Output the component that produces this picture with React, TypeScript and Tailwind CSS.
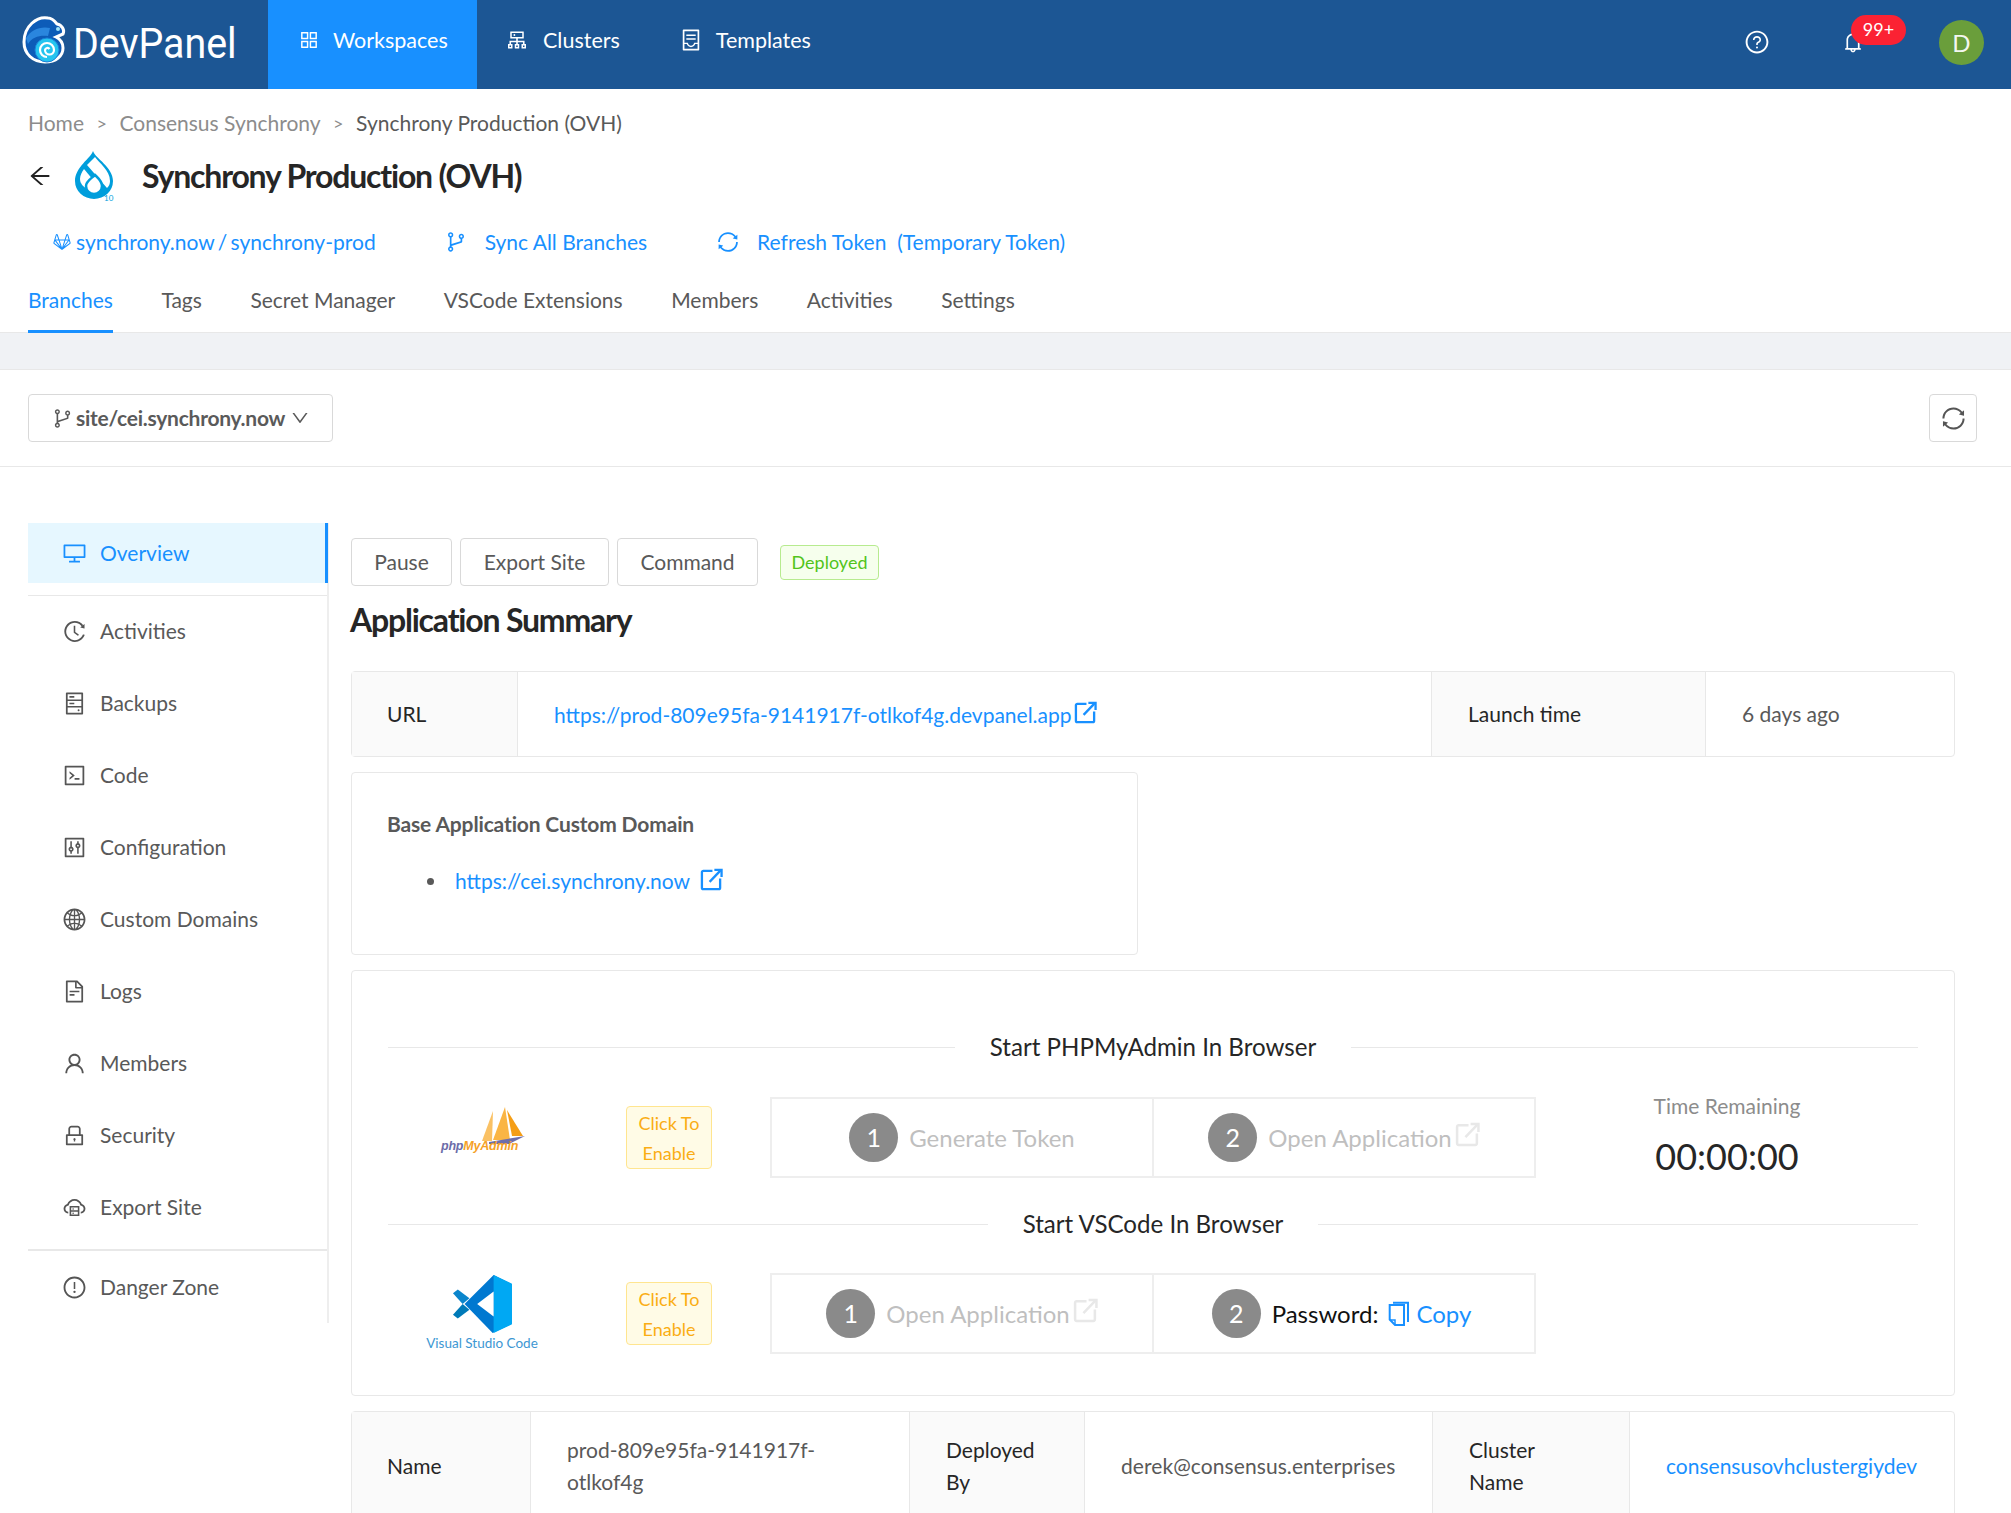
import React from "react";
import {
  AiOutlineAppstore, AiOutlineCluster, AiOutlineContainer, AiOutlineQuestionCircle, AiOutlineBell,
  AiOutlineDesktop, AiOutlineHistory, AiOutlineHdd, AiOutlineCode, AiOutlineControl, AiOutlineGlobal,
  AiOutlineFileText, AiOutlineUser, AiOutlineLock, AiOutlineCloudServer, AiOutlineExclamationCircle,
  AiOutlineBranches, AiOutlineSync, AiOutlineArrowLeft, AiOutlineGitlab, AiOutlineDown,
} from "react-icons/ai";

function Logo() {
  return (
    <svg viewBox="0 0 60 60" className="w-[60px] h-[60px] -mt-[9px]">
      <path d="M33 8C22 6 9 16 9 32c0 12 9 20 21 20 11 0 18-6 18-14 0-5-3-9-7-11l7-3c2-4-1-9-6-10-3-4-5-6-9-6z" fill="#0d5cb8" stroke="#fff" strokeWidth="3" />
      <path d="M11 28c5-8 14-12 24-10l-2 8c-8-1-16 1-20 8z" fill="#2a86de" />
      <circle cx="32" cy="40" r="12" fill="#25c4ef" stroke="#1a7fd8" strokeWidth="1" />
      <path d="M32 47a7 7 0 1 1 7-7 4.500 4.500 0 1 1-9 0 2.500 2.500 0 0 1 4.500-1" fill="none" stroke="#fff" strokeWidth="2.200" />
      <circle cx="43" cy="19" r="2" fill="#9fe3f7" />
    </svg>
  );
}

function Ext({ className }: { className?: string }) {
  return (
    <svg viewBox="0 0 24 24" fill="none" stroke="currentColor" strokeWidth="2.4" className={className}>
      <path d="M13 3H3.500A1.500 1.500 0 0 0 2 4.500v16A1.500 1.500 0 0 0 3.500 22h16a1.500 1.500 0 0 0 1.500-1.500V11" />
      <path d="M10 14.500L21.500 2.500" />
      <path d="M15 2h7.500v7.500" />
    </svg>
  );
}

function CopyIcon({ className }: { className?: string }) {
  return (
    <svg viewBox="9 11 22 26" fill="none" stroke="currentColor" strokeWidth="2" className={className}>
      <path d="M10.700 15H25v20h-9l-5.300-5.500z" />
      <path d="M11 30h5v5" strokeWidth="1.500" />
      <path d="M14 12.700h15V32" />
    </svg>
  );
}

function Drupal() {
  return (
    <div className="relative w-[40px] h-[50px]">
      <svg viewBox="10 6 40 48" className="w-[40px] h-[48px]">
        <path d="M28 6c2 7 20 16 20 30a19 18 0 0 1-38 0C10 22 26 13 28 6z" fill="#009edc" />
        <path d="M30 12c4 6 15 13 15 24 0 3-1 5-3 7L22 20z" fill="#fff" />
        <path d="M19 24l10 12-7 8c-3-2-7-5-7-10 0-4 2-7 4-10z" fill="#fff" />
        <path d="M30 30c3 3 7 6 7 11a8 8 0 0 1-16 0c0-5 6-8 9-11z" fill="#fff" stroke="#009edc" strokeWidth="2.500" />
      </svg>
      <span className="absolute left-[29px] top-[43px] text-[8px] leading-[8px] text-[#009edc]">10</span>
    </div>
  );
}

function Php() {
  return (
    <div className="relative w-[88px] h-[54px]">
      <svg viewBox="0 0 88 54" className="w-[88px] h-[54px]">
        <path d="M52 5L41 35h10z" fill="#f9b23d" opacity=".8" />
        <path d="M64 1L52 34h17z" fill="#f9ad30" opacity=".9" />
        <path d="M66 4l5 26h11z" fill="#f59e16" />
        <path d="M48 36l36-6-16 8H48z" fill="#6e6eaa" />
      </svg>
      <span className="absolute left-0 top-[32px] text-[12.500px] leading-[16px] italic font-bold [font-family:'Liberation_Sans',sans-serif] tracking-[-0.2px]">
        <span className="text-[#6c6ca8]">php</span><span className="text-[#f5a128]">MyAdmin</span>
      </span>
    </div>
  );
}

function VsCode() {
  return (
    <div className="flex flex-col items-center w-[112px] pt-[1px]">
      <svg viewBox="0 0 64 62" className="w-[62px] h-[60px]">
        <path d="M44 1L14 31l29 30 19-9V10z" fill="#0078d0" />
        <path d="M44 1l19 9v42l-19 9z" fill="#00a8f3" />
        <path d="M44 18v26L27 31z" fill="#fff" />
        <path d="M2 20l5-4 12 9-7 6z" fill="#0a85cc" />
        <path d="M2 42l5 4 12-9-7-6z" fill="#007ab8" />
      </svg>
      <span className="text-[13.500px] leading-[16px] text-[#3d97d3] whitespace-nowrap mt-[1px]">Visual Studio Code</span>
    </div>
  );
}

const navItems = [
  { label: "Activities", icon: AiOutlineHistory },
  { label: "Backups", icon: AiOutlineHdd },
  { label: "Code", icon: AiOutlineCode },
  { label: "Configuration", icon: AiOutlineControl },
  { label: "Custom Domains", icon: AiOutlineGlobal },
  { label: "Logs", icon: AiOutlineFileText },
  { label: "Members", icon: AiOutlineUser },
  { label: "Security", icon: AiOutlineLock },
  { label: "Export Site", icon: AiOutlineCloudServer },
];

function Side({ label, icon: Icon }: { label: string; icon: React.ComponentType<{ className?: string }> }) {
  return (
    <div className="flex items-center h-[72px] pl-[34px] gap-[13px] text-[#595959] text-[21px]">
      <Icon className="w-[25px] h-[25px] text-[#555]" />
      <span>{label}</span>
    </div>
  );
}

function Circle({ n }: { n: string }) {
  return <span className="w-[49px] h-[49px] rounded-full bg-[#8a8a8a] text-white text-[25px] flex items-center justify-center">{n}</span>;
}

function Step({ n, text, link, className }: { n: string; text: string; link?: boolean; className: string }) {
  return (
    <div className={"flex items-center justify-center gap-[11px] " + className}>
      <Circle n={n} />
      <span className="text-[24px] text-[#bfbfbf] flex items-center">
        {text}
        {link && <Ext className="w-[25px] h-[25px] -mt-[7px] ml-[3px] text-[#e8e8e8]" />}
      </span>
    </div>
  );
}

function ClickTag() {
  return (
    <div className="w-[86px] h-[63px] rounded-[4px] border border-[#ffe58f] bg-[#fffbe6] text-[#faad14] text-[18px] leading-[30px] text-center py-[1px]">
      Click To<br />Enable
    </div>
  );
}

function DividerTitle({ title }: { title: string }) {
  return (
    <div className="flex items-center gap-[35px] text-[24.100px] text-[#262626] leading-[32px]">
      <div className="flex-1 h-px bg-[#e8e8e8]" />
      <span>{title}</span>
      <div className="flex-1 h-px bg-[#e8e8e8]" />
    </div>
  );
}

export default function App() {
  return (
    <div className="w-[2011px] h-[1513px] overflow-hidden bg-white [font-family:Lato,sans-serif] text-[#595959]">
      <header className="h-[89px] bg-[#1c5694] flex items-stretch text-white">
        <div className="w-[268px] flex items-center pl-[15px] shrink-0">
          <Logo />
          <span className="-ml-[2px] text-[43px] leading-[44px] -mt-[4px] [font-family:Roboto,sans-serif] font-normal origin-left scale-x-[0.915]">DevPanel</span>
        </div>
        <div className="w-[209px] bg-[#1890ff] flex items-center pl-[30px] pb-[9px] gap-[13px] text-[21.500px]">
          <AiOutlineAppstore className="w-[22px] h-[22px]" />
          <span>Workspaces</span>
        </div>
        <div className="flex items-center pl-[28px] pb-[9px] gap-[14px] text-[21.500px]">
          <AiOutlineCluster className="w-[24px] h-[24px]" />
          <span>Clusters</span>
        </div>
        <div className="flex items-center pl-[59px] pb-[9px] gap-[13px] text-[21.500px]">
          <AiOutlineContainer className="w-[24px] h-[24px]" />
          <span>Templates</span>
        </div>
        <div className="ml-auto flex items-center pr-[27px]">
          <AiOutlineQuestionCircle className="w-[26px] h-[26px] mr-[71px] -mt-[6px]" />
          <div className="relative mr-[74px] -mt-[6px]">
            <AiOutlineBell className="w-[24px] h-[24px]" />
            <span className="absolute left-[10px] -top-[15px] w-[55px] h-[30px] rounded-full bg-[#fb2233] text-[18px] flex items-center justify-center">99+</span>
          </div>
          <span className="w-[45px] h-[45px] rounded-full bg-[#6a9e3b] flex items-center justify-center text-[24px] -mt-[4px] text-[#f3f7ef]">D</span>
        </div>
      </header>

      <div className="h-[244px] pl-[28px]">
        <div className="flex items-center pt-[20px] text-[21px] leading-[28px] text-[#8c8c8c]">
          <span>Home</span>
          <span className="mx-[12.500px] text-[18px]">&gt;</span>
          <span>Consensus Synchrony</span>
          <span className="mx-[12.500px] text-[18px]">&gt;</span>
          <span className="text-[#595959]">Synchrony Production (OVH)</span>
        </div>
        <div className="flex items-center h-[52px] mt-[13px]">
          <AiOutlineArrowLeft className="w-[26px] h-[26px] text-[#222] -ml-[1px]" />
          <div className="ml-[22px]"><Drupal /></div>
          <h1 className="ml-[27px] text-[32px] font-bold leading-[40px] text-[#262626] tracking-[-1.2px] -mt-[1px]">Synchrony Production (OVH)</h1>
        </div>
        <div className="flex items-center h-[32px] mt-[24px] text-[21px] text-[#1890ff]">
          <AiOutlineGitlab className="w-[22px] h-[22px] ml-[23px] mr-[3px]" />
          <span className="[word-spacing:-2px]">synchrony.now / synchrony-prod</span>
          <AiOutlineBranches className="w-[24px] h-[24px] ml-[68px]" />
          <span className="ml-[17px]">Sync All Branches</span>
          <AiOutlineSync className="w-[24px] h-[24px] ml-[69px]" />
          <span className="ml-[17px]">Refresh Token&nbsp; (Temporary Token)</span>
        </div>
        <div className="flex mt-[26px] text-[21px] leading-[32px] gap-[48.500px] text-[#595959] border-b border-[#e8e8e8] -ml-[28px] pl-[28px] h-[49px]">
          <span className="text-[#1890ff] border-b-[3px] border-[#1890ff] h-[49px]">Branches</span>
          <span>Tags</span>
          <span>Secret Manager</span>
          <span>VSCode Extensions</span>
          <span>Members</span>
          <span>Activities</span>
          <span>Settings</span>
        </div>
      </div>

      <div className="h-[37px] bg-[#f0f2f5] border-b border-[#e8e8e8]" />

      <div className="h-[97px] border-b border-[#e8e8e8] flex items-center justify-between pl-[28px] pr-[34px]">
        <div className="w-[305px] h-[48px] rounded-[4px] border border-[#d9d9d9] flex items-center pl-[22px] gap-[2px] text-[21px] text-[#595959]">
          <AiOutlineBranches className="w-[23px] h-[23px]" />
          <span className="font-bold tracking-[-0.25px] text-[#5a5a5a]">site/cei.synchrony.now</span>
          <AiOutlineDown className="w-[20px] h-[20px] ml-[3px]" />
        </div>
        <div className="w-[48px] h-[48px] rounded-[4px] border border-[#d9d9d9] flex items-center justify-center">
          <AiOutlineSync className="w-[27px] h-[27px] text-[#555]" />
        </div>
      </div>

      <div className="flex pl-[28px] pr-[56px] pt-[56px] items-start">
        <aside className="w-[301px] border-r-2 border-[#eeeeee] shrink-0">
          <div className="h-[60px] bg-[#e6f7ff] flex items-center pl-[34px] gap-[13px] text-[21px] text-[#1890ff] border-r-[3px] border-[#1890ff] -mr-[1px]">
            <AiOutlineDesktop className="w-[25px] h-[25px]" />
            <span className="-mt-[1px]">Overview</span>
          </div>
          <div className="h-px bg-[#e8e8e8] mt-[12px]" />
          <div className="-mt-[1px]">
            {navItems.map((n) => <Side key={n.label} label={n.label} icon={n.icon} />)}
          </div>
          <div className="h-[2px] bg-[#e8e8e8] mt-[6px]" />
          <Side label="Danger Zone" icon={AiOutlineExclamationCircle} />
        </aside>

        <main className="ml-[22px] flex-1 min-w-0">
          <div className="flex items-center gap-[8px] mt-[18px] h-[41px]">
            <button className="h-[48px] w-[101px] rounded-[4px] border border-[#d9d9d9] text-[21px] text-[#595959]">Pause</button>
            <button className="h-[48px] w-[149px] rounded-[4px] border border-[#d9d9d9] text-[21px] text-[#595959]">Export Site</button>
            <button className="h-[48px] w-[141px] rounded-[4px] border border-[#d9d9d9] text-[21px] text-[#595959]">Command</button>
            <span className="ml-[14px] h-[35px] w-[99px] mt-[1px] rounded-[4px] border border-[#b7eb8f] bg-[#f6ffed] text-[#52c41a] text-[18px] flex items-center justify-center">Deployed</span>
          </div>
          <h2 className="mt-[18px] text-[32px] leading-[40px] font-bold text-[#262626] tracking-[-1.2px] -ml-[1px]">Application Summary</h2>

          <div className="mt-[31px] h-[86px] rounded-[4px] border border-[#e8e8e8] flex text-[21px]">
            <div className="w-[166px] bg-[#fafafa] border-r border-[#e8e8e8] flex items-center pl-[35px] pb-[1px] text-[#262626]">URL</div>
            <div className="w-[913px] flex items-center pl-[36px] text-[#1890ff]">
              <span className="mt-[2px]">https://prod-809e95fa-9141917f-otlkof4g.devpanel.app</span>
              <Ext className="w-[23px] h-[23px] ml-[2px] -mt-[3px]" />
            </div>
            <div className="w-[275px] bg-[#fafafa] border-x border-[#e8e8e8] flex items-center pl-[36px] pb-[1px] text-[#262626]">Launch time</div>
            <div className="flex-1 flex items-center pl-[36px] pb-[1px]">6 days ago</div>
          </div>

          <div className="mt-[15px] w-[787px] h-[183px] rounded-[4px] border border-[#e8e8e8] pl-[35px]">
            <div className="mt-[35px] text-[21px] leading-[32px] font-bold text-[#595959] tracking-[-0.15px]">Base Application Custom Domain</div>
            <ul className="mt-[25px] pl-[40px] text-[21px] leading-[32px] list-none">
              <li className="flex items-center gap-[21px]">
                <span className="w-[7px] h-[7px] rounded-full bg-[#595959]" />
                <span className="inline-flex items-center text-[#1890ff]">https://cei.synchrony.now<Ext className="w-[23px] h-[23px] ml-[10px] -mt-[4px]" /></span>
              </li>
            </ul>
          </div>

          <div className="mt-[15px] h-[426px] rounded-[4px] border border-[#e8e8e8] px-[36px] pt-[60px]">
            <DividerTitle title="Start PHPMyAdmin In Browser" />
            <div className="flex items-start mt-[34px] h-[81px]">
              <div className="w-[238px] pl-[53px] pt-[9px] shrink-0"><Php /></div>
              <div className="pt-[9px] w-[144px] shrink-0"><ClickTag /></div>
              <div className="flex w-[766px] h-[81px] border-2 border-[#eeeeee] shrink-0">
                <Step n="1" text="Generate Token" className="w-[382px] border-r-2 border-[#eeeeee]" />
                <Step n="2" text="Open Application" link className="flex-1" />
              </div>
              <div className="flex-1 text-center -mt-[7px]">
                <div className="text-[21px] leading-[32px] text-[#8c8c8c]">Time Remaining</div>
                <div className="text-[36px] leading-[50px] text-[#262626] mt-[9px]">00:00:00</div>
              </div>
            </div>
            <div className="mt-[30px]"><DividerTitle title="Start VSCode In Browser" /></div>
            <div className="flex items-start mt-[33px] h-[81px]">
              <div className="w-[238px] pl-[38px] shrink-0"><VsCode /></div>
              <div className="pt-[9px] w-[144px] shrink-0"><ClickTag /></div>
              <div className="flex w-[766px] h-[81px] border-2 border-[#eeeeee] shrink-0">
                <Step n="1" text="Open Application" link className="w-[382px] border-r-2 border-[#eeeeee]" />
                <div className="flex-1 flex items-center justify-center gap-[11px] pr-[5px]">
                  <Circle n="2" />
                  <span className="text-[24px] text-[#111] flex items-center">
                    Password:
                    <CopyIcon className="w-[22px] h-[26px] ml-[10px] mr-[6px] text-[#1890ff]" />
                    <span className="text-[#1890ff]">Copy</span>
                  </span>
                </div>
              </div>
            </div>
          </div>

          <div className="mt-[15px] h-[110px] rounded-[4px] border border-[#e8e8e8] flex text-[21px] leading-[32px]">
            <div className="w-[179px] bg-[#fafafa] border-r border-[#e8e8e8] flex items-center pl-[35px] text-[#262626]">Name</div>
            <div className="w-[378px] flex items-center pl-[36px] pr-[36px]">prod-809e95fa-9141917f-otlkof4g</div>
            <div className="w-[176px] bg-[#fafafa] border-x border-[#e8e8e8] flex items-center pl-[36px] pr-[40px] text-[#262626]">Deployed By</div>
            <div className="w-[347px] flex items-center pl-[36px] whitespace-nowrap tracking-[0.08px]">derek@consensus.enterprises</div>
            <div className="w-[198px] bg-[#fafafa] border-x border-[#e8e8e8] flex items-center pl-[36px] pr-[50px] text-[#262626]">Cluster Name</div>
            <div className="flex-1 flex items-center pl-[36px] text-[#1890ff] whitespace-nowrap">consensusovhclustergiydev</div>
          </div>
        </main>
      </div>
    </div>
  );
}
